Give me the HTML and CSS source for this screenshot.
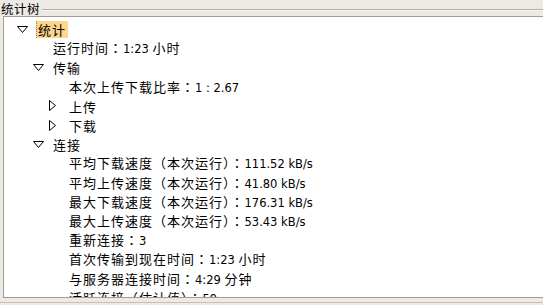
FILE: index.html
```html
<!DOCTYPE html>
<html>
<head>
<meta charset="utf-8">
<link rel="stylesheet" href="styles.css">
</head>
<body>
<div class="frame">
  <div class="frame-head">
    <span class="frame-title">统计树</span>
    <span class="frame-line"></span>
  </div>
  <div class="tree">
    <div class="row lv0"><span class="exp"><svg width="12" height="8" viewBox="0 0 12 8"><path d="M0.5 0.5 H10.5 L5.5 6.5 Z" fill="none" stroke="#000" stroke-width="1"/></svg></span><span class="label sel">统计</span></div>
    <div class="row lv1"><span class="exp"></span><span class="label">运行时间：<span class="t">1:23 </span>小时</span></div>
    <div class="row lv1"><span class="exp"><svg width="12" height="8" viewBox="0 0 12 8"><path d="M0.5 0.5 H10.5 L5.5 6.5 Z" fill="none" stroke="#000" stroke-width="1"/></svg></span><span class="label">传输</span></div>
    <div class="row lv2"><span class="exp"></span><span class="label">本次上传下载比率：<span class="t">1 : 2.67</span></span></div>
    <div class="row lv2"><span class="exp"><svg width="8" height="12" viewBox="0 0 8 12"><path d="M0.5 0.5 V10.5 L6.5 5.5 Z" fill="none" stroke="#000" stroke-width="1"/></svg></span><span class="label">上传</span></div>
    <div class="row lv2"><span class="exp"><svg width="8" height="12" viewBox="0 0 8 12"><path d="M0.5 0.5 V10.5 L6.5 5.5 Z" fill="none" stroke="#000" stroke-width="1"/></svg></span><span class="label">下载</span></div>
    <div class="row lv1"><span class="exp"><svg width="12" height="8" viewBox="0 0 12 8"><path d="M0.5 0.5 H10.5 L5.5 6.5 Z" fill="none" stroke="#000" stroke-width="1"/></svg></span><span class="label">连接</span></div>
    <div class="row lv2"><span class="exp"></span><span class="label">平均下载速度（本次运行）：<span class="t">111.52 kB/s</span></span></div>
    <div class="row lv2"><span class="exp"></span><span class="label">平均上传速度（本次运行）：<span class="t">41.80 kB/s</span></span></div>
    <div class="row lv2"><span class="exp"></span><span class="label">最大下载速度（本次运行）：<span class="t">176.31 kB/s</span></span></div>
    <div class="row lv2"><span class="exp"></span><span class="label">最大上传速度（本次运行）：<span class="t">53.43 kB/s</span></span></div>
    <div class="row lv2"><span class="exp"></span><span class="label">重新连接：<span class="t">3</span></span></div>
    <div class="row lv2"><span class="exp"></span><span class="label">首次传输到现在时间：<span class="t">1:23 </span>小时</span></div>
    <div class="row lv2"><span class="exp"></span><span class="label">与服务器连接时间：<span class="t">4:29 </span>分钟</span></div>
    <div class="row lv2"><span class="exp"></span><span class="label">活跃连接（估计值）：<span class="t">59</span></span></div>
  </div>
  <div class="frame-bottom"></div>
</div>
</body>
</html>
```

FILE: styles.css
```css
html, body {
  margin: 0;
  padding: 0;
  background: #edeae6;
  width: 543px;
  height: 305px;
  overflow: hidden;
}
body {
  font-family: "Noto Sans CJK JP", "Noto Sans CJK SC", sans-serif;
  font-size: 13px;
  color: #000;
}
.frame {
  display: flex;
  flex-direction: column;
  height: 305px;
}
.frame-head {
  display: flex;
  align-items: flex-start;
  height: 16px;
}
.frame-title {
  font-size: 12.5px;
  line-height: 15px;
  padding-top: 1px;
  letter-spacing: 0.5px;
  padding-left: 1px;
}
.frame-line {
  flex: 1;
  margin-top: 9px;
  margin-left: 2px;
  border-top: 1px solid #b8b0a6;
  border-bottom: 1px solid #f8f6f3;
}
.tree {
  margin-left: 3px;
  height: 282px;
  box-sizing: border-box;
  background: #fff;
  border-top: 1px solid #a39b90;
  border-left: 1px solid #a39b90;
  border-bottom: 1px solid #a39b90;
  padding-top: 3px;
  overflow: hidden;
}
.row {
  display: flex;
  align-items: center;
  height: 19.2px;
  white-space: nowrap;
}
.lv0 { padding-left: 10px; }
.lv1 { padding-left: 26px; }
.lv2 { padding-left: 42px; }
.exp {
  width: 22px;
  flex: none;
  display: flex;
  align-items: center;
  padding-left: 3px;
  box-sizing: border-box;
}
.exp svg { display: block; }
.label {
  padding: 0 2px 0 1px;
  line-height: 17px;
  letter-spacing: 1px;
}
.t {
  font-family: "DejaVu Sans", sans-serif;
  font-size: 11.5px;
  letter-spacing: 0;
}
.sel {
  background: #fdd68c;
  border-left: 1px dotted #a08040;
  padding-left: 1px;
}
.frame-bottom {
  margin-top: 4px;
  border-top: 1px solid #cdbfae;
}
```
